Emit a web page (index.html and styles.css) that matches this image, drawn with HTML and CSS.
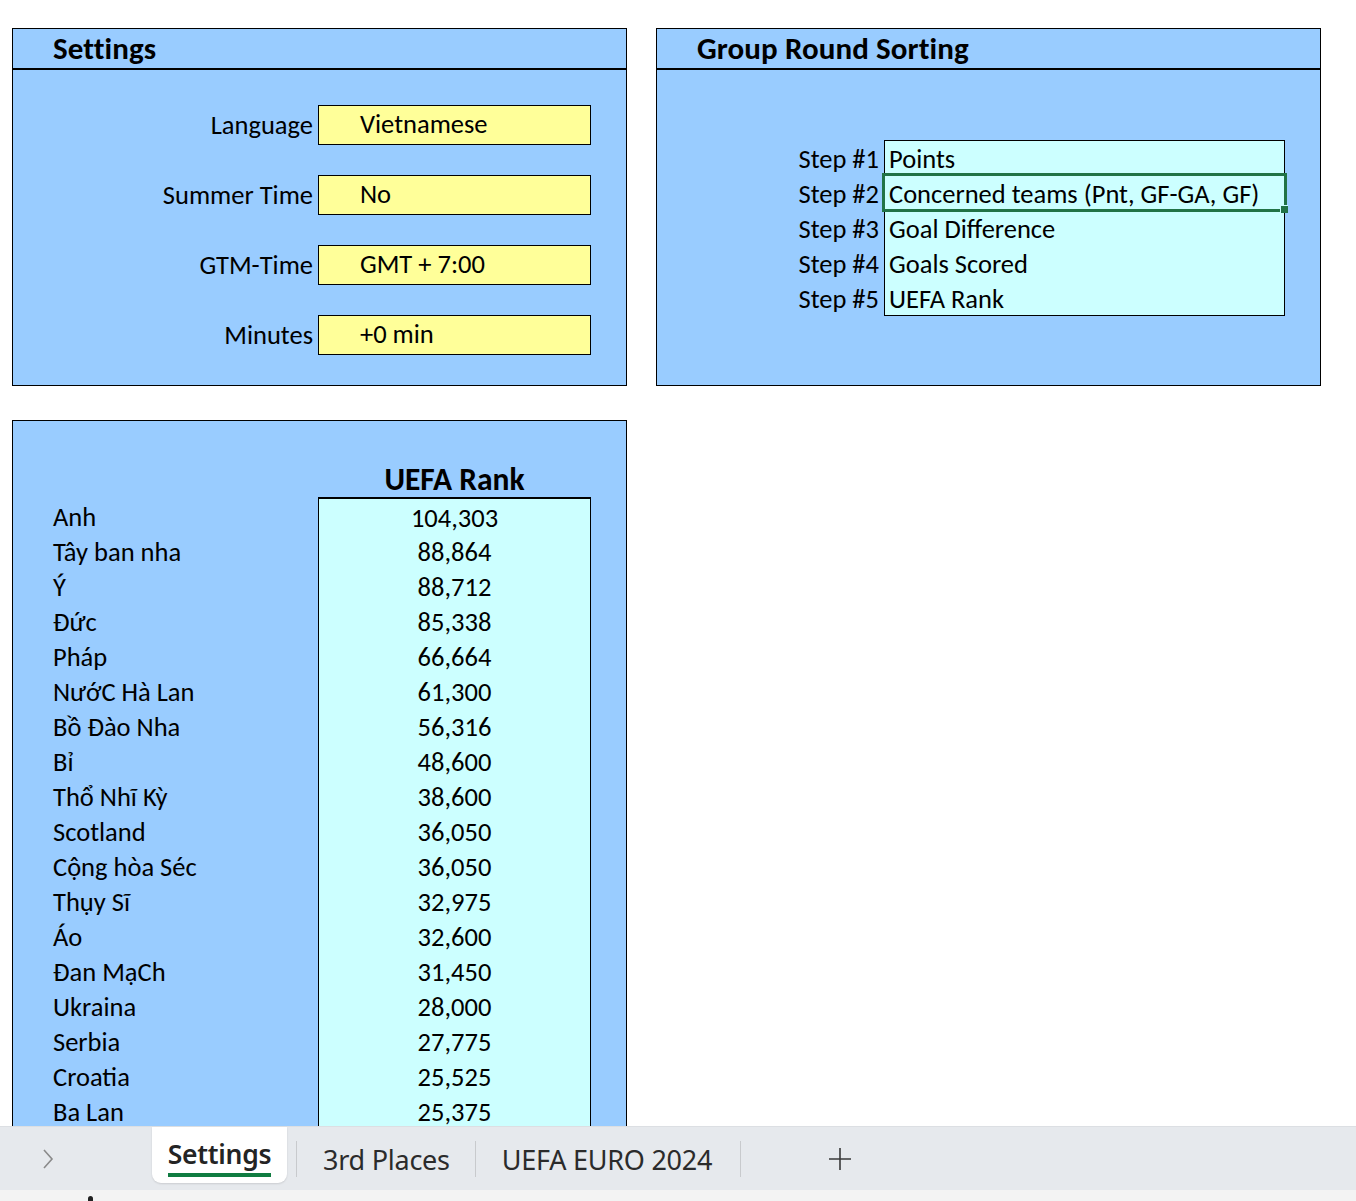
FILE: index.html
```html
<!DOCTYPE html>
<html lang="vi">
<head>
<meta charset="utf-8">
<title>Settings</title>
<link rel="stylesheet" href="styles.css">
</head>
<body>
<div class="app">
  <div class="sheet">
    <div class="top-row">
      <section class="panel panel-settings">
        <div class="panel-head"><h1>Settings</h1></div>
        <div class="settings-body">
          <div class="spacer"></div>
          <div class="set-row"><span class="label">Language</span><span class="ybox">Vietnamese</span></div>
          <div class="spacer"></div>
          <div class="set-row"><span class="label">Summer Time</span><span class="ybox">No</span></div>
          <div class="spacer"></div>
          <div class="set-row"><span class="label">GTM-Time</span><span class="ybox">GMT + 7:00</span></div>
          <div class="spacer"></div>
          <div class="set-row"><span class="label">Minutes</span><span class="ybox">+0 min</span></div>
          <div class="spacer"></div>
        </div>
      </section>
      <section class="panel panel-sort">
        <div class="panel-head"><h1>Group Round Sorting</h1></div>
        <div class="sort-body">
          <div class="steps">
            <div class="step-labels">
              <span>Step #1</span>
              <span>Step #2</span>
              <span>Step #3</span>
              <span>Step #4</span>
              <span>Step #5</span>
            </div>
            <div class="cbox">
              <span>Points</span>
              <span class="selected">Concerned teams (Pnt, GF-GA, GF)<i class="handle"></i></span>
              <span>Goal Difference</span>
              <span>Goals Scored</span>
              <span>UEFA Rank</span>
            </div>
          </div>
        </div>
      </section>
    </div>
    <section class="panel panel-rank">
      <div class="rank-blank"></div>
      <div class="rank-head"><span></span><h2>UEFA Rank</h2></div>
      <div class="rank-body">
        <div class="rank-row"><span>Anh</span><span class="num">104,303</span></div>
        <div class="rank-row"><span>Tây ban nha</span><span class="num">88,864</span></div>
        <div class="rank-row"><span>Ý</span><span class="num">88,712</span></div>
        <div class="rank-row"><span>Đức</span><span class="num">85,338</span></div>
        <div class="rank-row"><span>Pháp</span><span class="num">66,664</span></div>
        <div class="rank-row"><span>NướC Hà Lan</span><span class="num">61,300</span></div>
        <div class="rank-row"><span>Bồ Đào Nha</span><span class="num">56,316</span></div>
        <div class="rank-row"><span>Bỉ</span><span class="num">48,600</span></div>
        <div class="rank-row"><span>Thổ Nhĩ Kỳ</span><span class="num">38,600</span></div>
        <div class="rank-row"><span>Scotland</span><span class="num">36,050</span></div>
        <div class="rank-row"><span>Cộng hòa Séc</span><span class="num">36,050</span></div>
        <div class="rank-row"><span>Thụy Sĩ</span><span class="num">32,975</span></div>
        <div class="rank-row"><span>Áo</span><span class="num">32,600</span></div>
        <div class="rank-row"><span>Đan MạCh</span><span class="num">31,450</span></div>
        <div class="rank-row"><span>Ukraina</span><span class="num">28,000</span></div>
        <div class="rank-row"><span>Serbia</span><span class="num">27,775</span></div>
        <div class="rank-row"><span>Croatia</span><span class="num">25,525</span></div>
        <div class="rank-row"><span>Ba Lan</span><span class="num">25,375</span></div>
      </div>
    </section>
  </div>
  <nav class="tabbar">
    <div class="nav-arrow">
      <svg width="14" height="22" viewBox="0 0 14 22"><path d="M3 2 L11 11 L3 20" fill="none" stroke="#8a8a8a" stroke-width="1.6"/></svg>
    </div>
    <div class="tab active"><span>Settings</span></div>
    <div class="sep"></div>
    <div class="tab tab-3rd"><span>3rd Places</span></div>
    <div class="sep"></div>
    <div class="tab tab-euro"><span>UEFA EURO 2024</span></div>
    <div class="sep"></div>
    <div class="add">
      <svg width="24" height="24" viewBox="0 0 24 24"><path d="M12 1 V23 M1 12 H23" stroke="#3a3a3a" stroke-width="1.6"/></svg>
    </div>
  </nav>
  <div class="status"><i class="status-mark"></i></div>
</div>
</body>
</html>
```

FILE: styles.css
```css
* { box-sizing: border-box; }
html, body { margin: 0; padding: 0; }
body {
  background: #ffffff;
  font-family: Carlito, Lato, "Liberation Sans", sans-serif;
  color: #000;
}
.app {
  height: 1201px;
  display: flex;
  flex-direction: column;
  overflow: hidden;
}
.sheet {
  flex: 1;
  min-height: 0;
  overflow: hidden;
  padding: 28px 0 0 12px;
}
.top-row {
  display: flex;
  gap: 29px;
  align-items: flex-start;
}
.panel {
  background: #99ccff;
  border: 1px solid #000;
}
.panel-settings { width: 615px; }
.panel-sort { width: 665px; }
.panel-head {
  height: 41px;
  border-bottom: 2px solid #000;
  padding-left: 40px;
  display: flex;
  align-items: flex-end;
}
.panel-head h1 {
  margin: 0;
  font-size: 31px;
  font-weight: 700;
  line-height: 40px;
  letter-spacing: 0.1px;
}
.settings-body { display: flex; flex-direction: column; }
.spacer { height: 35px; }
.set-row {
  height: 35px;
  display: grid;
  grid-template-columns: 305px 273px;
  font-size: 26.5px;
}
.label {
  text-align: right;
  padding-right: 5px;
  line-height: 40px;
}
.ybox {
  background: #ffff99;
  border: 1px solid #000;
  padding-left: 41px;
  line-height: 37px;
}
.sort-body {
  height: 315px;
  padding-top: 70px;
}
.steps {
  display: grid;
  grid-template-columns: 227px 401px;
  font-size: 26.5px;
}
.step-labels, .cbox {
  display: flex;
  flex-direction: column;
}
.step-labels span {
  height: 35px;
  line-height: 38px;
  text-align: right;
  padding-right: 5px;
}
.cbox {
  background: #ccffff;
  border: 1px solid #000;
}
.cbox span {
  height: 35px;
  line-height: 38px;
  padding-left: 4px;
}
.cbox span:first-child { height: 34px; line-height: 37px; }
.cbox .selected {
  position: relative;
  outline: 3px solid #217346;
  outline-offset: -1px;
  margin: 0 -1px;
  padding-left: 5px;
}
.handle {
  position: absolute;
  right: -3px;
  bottom: -3px;
  width: 8px;
  height: 8px;
  background: #217346;
  border: 1px solid #ccffff;
  border-width: 1px 0 0 1px;
}
.panel-rank {
  width: 615px;
  margin-top: 34px;
  font-size: 26.5px;
}
.rank-blank { height: 35px; }
.rank-head {
  height: 41px;
  display: grid;
  grid-template-columns: 305px 273px;
}
.rank-head h2 {
  margin: 0;
  text-align: center;
  font-size: 31.5px;
  font-weight: 700;
  line-height: 46px;
}
.rank-body { display: flex; flex-direction: column; }
.rank-row {
  height: 35px;
  display: grid;
  grid-template-columns: 305px 273px;
  line-height: 40px;
}
.rank-row:first-child .num { border-top: 2px solid #000; line-height: 38px; }
.rank-row span:first-child { padding-left: 40px; }
.num {
  background: #ccffff;
  border-left: 1px solid #000;
  border-right: 1px solid #000;
  text-align: center;
}
.tabbar {
  height: 64px;
  flex: none;
  background: #e6e9ed;
  border-top: 1px solid #dcdfe3;
  display: flex;
  align-items: center;
  font-family: "Noto Sans", "Open Sans", sans-serif;
  color: #2b2b2b;
}
.nav-arrow {
  width: 152px;
  height: 100%;
  padding-left: 41px;
  display: flex;
  align-items: center;
}
.tab {
  height: 100%;
  display: flex;
  align-items: center;
  font-size: 27px;
  letter-spacing: -0.25px;
  padding-top: 1px;
}
.tab-3rd { padding-left: 22px; padding-right: 16px; }
.tab-euro { padding-left: 22px; padding-right: 19px; }
.tab.active {
  width: 135px;
  height: 56px;
  padding-top: 0;
  align-self: flex-start;
  background: #ffffff;
  border-radius: 0 0 9px 9px;
  box-shadow: 0 1px 2px rgba(0,0,0,0.12);
  justify-content: center;
  font-size: 26.5px;
  font-weight: 600;
  color: #242424;
}
.tab.active span {
  border-bottom: 4px solid #107c41;
  line-height: 38px;
  padding-top: 2px;
}
.sep {
  width: 1px;
  height: 36px;
  background: #c8cacd;
  margin: 0 4px 0 9px;
}
.add {
  margin-left: 83px;
  display: flex;
  align-items: center;
}
.status {
  height: 11px;
  flex: none;
  background: #f3f3f3;
  position: relative;
}
.status-mark {
  position: absolute;
  left: 88px;
  top: 6px;
  width: 5px;
  height: 5px;
  border-radius: 3px 3px 0 0;
  background: #222;
}
```
